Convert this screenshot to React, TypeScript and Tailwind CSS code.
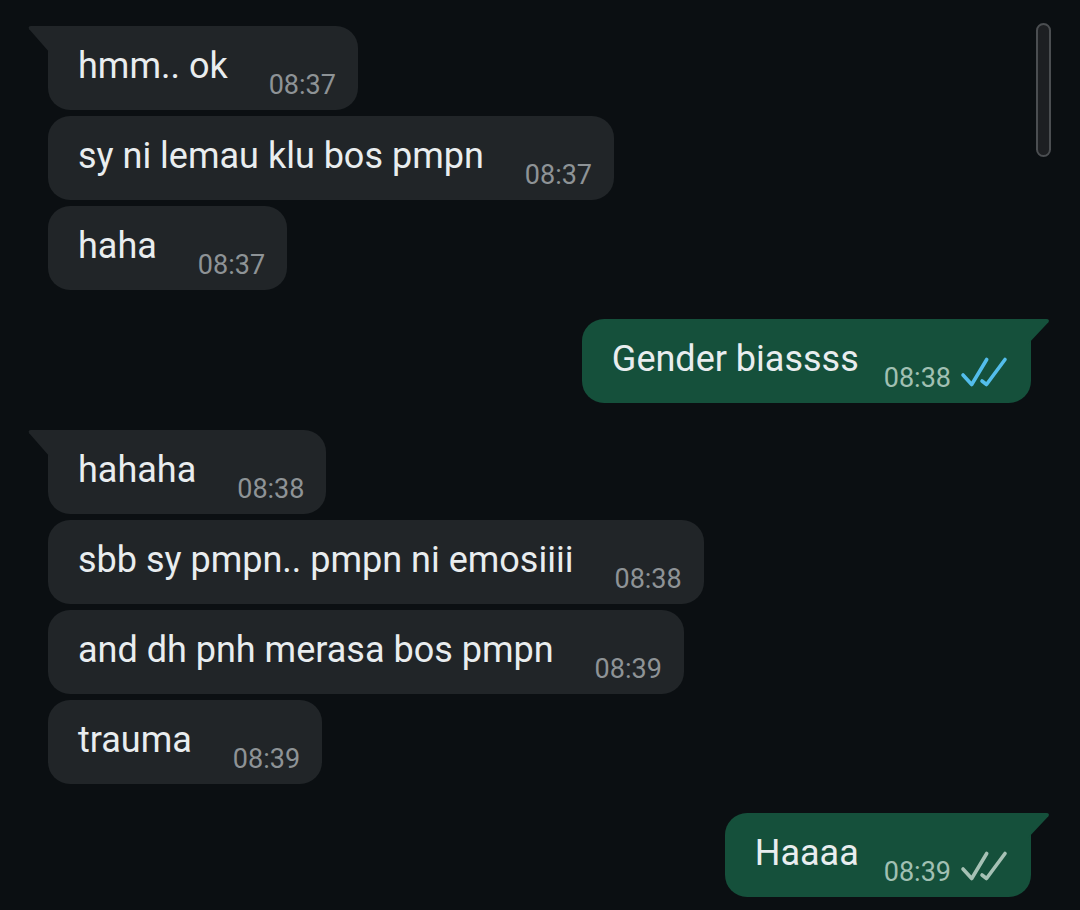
import { Fragment } from "react";

type Msg = {
  text: string;
  time: string;
  mine?: boolean;
  first?: boolean;
  read?: boolean;
};

const messages: Msg[] = [
  { text: "hmm.. ok", time: "08:37", first: true },
  { text: "sy ni lemau klu bos pmpn", time: "08:37" },
  { text: "haha", time: "08:37" },
  { text: "Gender biassss", time: "08:38", mine: true, first: true, read: true },
  { text: "hahaha", time: "08:38", first: true },
  { text: "sbb sy pmpn.. pmpn ni emosiiii", time: "08:38" },
  { text: "and dh pnh merasa bos pmpn", time: "08:39" },
  { text: "trauma", time: "08:39" },
  { text: "Haaaa", time: "08:39", mine: true, first: true, read: false },
];

const Ticks = ({ read }: { read?: boolean }) => (
  <svg width="48" height="32" viewBox="0 0 48 32" className="ml-[9px] mt-[17px] shrink-0">
    <g fill="none" stroke={read ? "#53bdeb" : "#a6c1b5"} strokeWidth="3.6" strokeLinecap="round" strokeLinejoin="round">
      <path d="M3 19 L11.7 28.5 L26.7 3.5" />
      <path d="M22 25 L26.5 28.5 L45 3.5" />
    </g>
  </svg>
);

const Bubble = ({ text, time, mine, first, read }: Msg) => {
  const bg = mine ? "bg-[#15503b]" : "bg-[#212528]";
  const corner = first ? (mine ? "rounded-tr-none" : "rounded-tl-none") : "";
  return (
    <div className={`relative flex items-start h-[84px] rounded-[22px] ${corner} ${bg} pl-[30px] ${mine ? "pr-[23px]" : "pr-[22px]"} pt-[20px]`}>
      {first && !mine && (
        <svg width="22" height="28" viewBox="0 0 22 28" className="absolute left-[-20px] top-0">
          <path d="M3 0 H22 V27 L1.2 3.2 C0 1.8 0.8 0 3 0 Z" fill="#212528" />
        </svg>
      )}
      {first && mine && (
        <svg width="22" height="26" viewBox="0 0 22 26" className="absolute right-[-19px] top-0">
          <path d="M0 0 H18.5 C20.8 0 21.6 1.8 20.4 3.2 L0 25 Z" fill="#15503b" />
        </svg>
      )}
      <span className="text-[36px] leading-[40px] text-[#e9edef] whitespace-nowrap">{text}</span>
      <span className={`${mine ? "ml-[25px] text-[#a1c0b3]" : "ml-[41px] text-[#8e9396]"} mt-[24px] text-[27px] leading-[30px] whitespace-nowrap`}>
        {time}
      </span>
      {mine && <Ticks read={read} />}
    </div>
  );
};

export default function App() {
  return (
    <div
      className="relative w-[1080px] h-[910px] overflow-hidden bg-[#0b0f12]"
      style={{ fontFamily: "Roboto, 'Noto Sans', sans-serif" }}
    >
      <div className="flex flex-col pt-[26px]">
        {messages.map((m, i) => {
          const prev = messages[i - 1];
          let gap = "";
          if (prev) {
            if (prev.mine === m.mine) gap = "mt-[6px]";
            else gap = m.mine ? "mt-[29px]" : "mt-[27px]";
          }
          return (
            <Fragment key={i}>
              <div className={`flex ${m.mine ? "justify-end pr-[49px]" : "justify-start pl-[48px]"} ${gap}`}>
                <Bubble {...m} />
              </div>
            </Fragment>
          );
        })}
      </div>

      {/* overlay scroll thumb */}
      <div className="absolute left-[1036px] top-[23px] w-[15px] h-[134px] rounded-full border-2 border-[#4b4e51] bg-[#1d1f22]" />
    </div>
  );
}
